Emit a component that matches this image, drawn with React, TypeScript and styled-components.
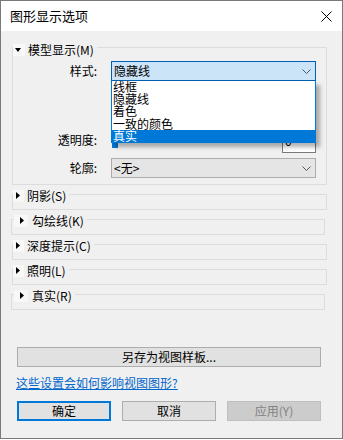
import React from 'react';
import styled, { createGlobalStyle } from 'styled-components';

const GlobalStyle = createGlobalStyle`
  html, body {
    margin: 0;
    padding: 0;
    background: #ffffff;
  }
  body {
    font-family: "Noto Sans CJK SC", "Microsoft YaHei", sans-serif;
    font-size: 12px;
    color: #000;
  }
  * {
    box-sizing: border-box;
  }
`;

const Window = styled.div`
  width: 343px;
  height: 439px;
  border: 1px solid #7a7a7a;
  background: #f0f0f0;
  display: flex;
  flex-direction: column;
`;

const TitleBar = styled.div`
  height: 30px;
  flex: none;
  background: #ffffff;
  display: flex;
  align-items: center;
  justify-content: space-between;
  padding: 0 9px 0 9px;
`;

const Title = styled.span`
  font-size: 13px;
  line-height: 14px;
`;

const CloseIcon = styled.svg`
  width: 11px;
  height: 11px;
  margin-right: 1px;
`;

const Body = styled.div`
  flex: 1;
  display: flex;
  flex-direction: column;
  padding-top: 10px;
`;

const Group = styled.fieldset<{ $indent?: boolean }>`
  margin: 0 0 3px ${(p) => (p.$indent ? 10 : 11)}px;
  width: ${(p) => (p.$indent ? 314 : 315)}px;
  min-width: 0;
  padding: 0;
  border: 1px solid #dcdcdc;
`;

const Legend = styled.legend<{ $indent?: boolean }>`
  padding: 0 3px 0 0;
  margin-left: ${(p) => (p.$indent ? 2 : 0)}px;
  height: 12px;
  line-height: 12px;
`;

const LegendInner = styled.span`
  display: inline-flex;
  align-items: center;
  height: 12px;
`;

const Toggle = styled.span<{ $indent?: boolean; $open?: boolean }>`
  display: inline-flex;
  align-items: center;
  height: 12px;
  width: ${(p) => (p.$indent ? 14 : p.$open ? 12 : 11)}px;
  padding-left: ${(p) => (p.$indent ? 6 : p.$open ? 2 : 3)}px;
  background: #f8f8f8;
`;

const ToggleLabel = styled.span<{ $indent?: boolean }>`
  margin-left: ${(p) => (p.$indent ? 4 : 3)}px;
  white-space: nowrap;
  line-height: 12px;
`;

const Collapsed = styled.div`
  height: 9px;
`;

const ModelBody = styled.div`
  padding: 8px 10px 6px 0;
  display: flex;
  flex-direction: column;
`;

const Row = styled.div<{ $h: number; $mt?: number }>`
  display: grid;
  grid-template-columns: 84px 205px;
  column-gap: 14px;
  height: ${(p) => p.$h}px;
  margin-top: ${(p) => p.$mt ?? 0}px;
  align-items: center;
`;

const Label = styled.span<{ $top?: boolean }>`
  text-align: right;
  line-height: 12px;
  align-self: ${(p) => (p.$top ? 'start' : 'center')};
  padding-top: ${(p) => (p.$top ? 4 : 0)}px;
`;

const ComboWrap = styled.div`
  position: relative;
  height: 100%;
`;

const Combo = styled.div<{ $active?: boolean }>`
  height: 100%;
  display: flex;
  align-items: center;
  justify-content: space-between;
  padding: 0 4px 0 2px;
  background: ${(p) => (p.$active ? '#cce4f7' : '#e5e5e5')};
  border: 1px solid ${(p) => (p.$active ? '#005fb0' : '#adadad')};
  line-height: 12px;
`;

const Chevron = styled.svg`
  width: 9px;
  height: 5px;
`;

const Popup = styled.ul`
  position: absolute;
  top: 100%;
  left: 0;
  width: 205px;
  margin: 0;
  padding: 0;
  list-style: none;
  background: #ffffff;
  border: 1px solid #0078d7;
  border-top: none;
  box-shadow: 4px 4px 4px rgba(0, 0, 0, 0.3);
  z-index: 5;
`;

const PopupItem = styled.li<{ $selected?: boolean }>`
  height: 12.2px;
  line-height: 12.2px;
  padding-left: 1px;
  white-space: nowrap;
  background: ${(p) => (p.$selected ? '#0078d7' : 'transparent')};
  color: ${(p) => (p.$selected ? '#ffffff' : '#000000')};
`;

const SliderRow = styled.div`
  height: 100%;
  display: flex;
  justify-content: space-between;
`;

const Slider = styled.div`
  position: relative;
  width: 160px;
  height: 18px;
  margin-left: 1px;
  display: flex;
  align-items: center;
`;

const Track = styled.div`
  position: absolute;
  left: 0;
  right: 0;
  top: 8px;
  height: 2px;
  background: #e7eaea;
  border: 1px solid #d6d6d6;
`;

const Thumb = styled.div`
  position: relative;
  width: 6px;
  height: 18px;
  background: #0078d7;
`;

const NumberBox = styled.div`
  width: 34px;
  height: 23px;
  border: 1px solid #7a7a7a;
  background: #fff;
  padding: 3px 0 0 2px;
  line-height: 14px;
`;

const Footer = styled.div`
  margin-top: auto;
  display: flex;
  flex-direction: column;
  padding: 0 0 17px 16px;
`;

const Button = styled.button<{ $primary?: boolean; $w?: number }>`
  width: ${(p) => p.$w ?? 94}px;
  height: 20px;
  padding: 0;
  font-family: inherit;
  font-size: 12px;
  line-height: 12px;
  color: ${(p) => (p.disabled ? '#838383' : '#000')};
  background: ${(p) => (p.disabled ? '#cccccc' : '#e1e1e1')};
  border: ${(p) => (p.$primary ? '2px solid #0078d7' : p.disabled ? '1px solid #bfbfbf' : '1px solid #adadad')};
`;

const HelpLink = styled.a`
  margin: 10px 0 12px -1px;
  color: #0066cc;
  text-decoration: underline;
  line-height: 12px;
  height: 12px;
`;

const ButtonRow = styled.div`
  display: flex;
  gap: 11px;
`;

const TriangleDown = () => (
  <svg width="6" height="4" viewBox="0 0 6 4">
    <path d="M0 0H6L3 4Z" fill="#000" />
  </svg>
);

const TriangleRight = () => (
  <svg width="4" height="7" viewBox="0 0 4 7">
    <path d="M0 0V7L4 3.5Z" fill="#000" />
  </svg>
);

const ChevronDown = () => (
  <Chevron viewBox="0 0 9 5">
    <path d="M0.5 0.5L4.5 4.5L8.5 0.5" fill="none" stroke="#555" strokeWidth="1" />
  </Chevron>
);

const sections = [
  { label: '阴影(S)', indent: false },
  { label: '勾绘线(K)', indent: true },
  { label: '深度提示(C)', indent: false },
  { label: '照明(L)', indent: false },
  { label: '真实(R)', indent: true },
];

const styles = ['线框', '隐藏线', '着色', '一致的颜色', '真实'];

const App: React.FC = () => {
  return (
    <>
      <GlobalStyle />
      <Window>
        <TitleBar>
          <Title>图形显示选项</Title>
          <CloseIcon viewBox="0 0 11 11">
            <path d="M0.5 0.5L10.5 10.5M10.5 0.5L0.5 10.5" stroke="#000" strokeWidth="1" />
          </CloseIcon>
        </TitleBar>
        <Body>
          <Group>
            <Legend>
              <LegendInner>
                <Toggle $open>
                  <TriangleDown />
                </Toggle>
                <ToggleLabel>模型显示(M)</ToggleLabel>
              </LegendInner>
            </Legend>
            <ModelBody>
              <Row $h={20}>
                <Label>样式:</Label>
                <ComboWrap>
                  <Combo $active>
                    <span>隐藏线</span>
                    <ChevronDown />
                  </Combo>
                  <Popup>
                    {styles.map((s) => (
                      <PopupItem key={s} $selected={s === '真实'}>
                        {s}
                      </PopupItem>
                    ))}
                  </Popup>
                </ComboWrap>
              </Row>
              <Row $h={49} />
              <Row $h={23}>
                <Label $top>透明度:</Label>
                <SliderRow>
                  <Slider>
                    <Track />
                    <Thumb />
                  </Slider>
                  <NumberBox>0</NumberBox>
                </SliderRow>
              </Row>
              <Row $h={20} $mt={5}>
                <Label>轮廓:</Label>
                <Combo>
                  <span>&lt;无&gt;</span>
                  <ChevronDown />
                </Combo>
              </Row>
            </ModelBody>
          </Group>
          {sections.map((s) => (
            <Group key={s.label} $indent={s.indent}>
              <Legend $indent={s.indent}>
                <LegendInner>
                  <Toggle $indent={s.indent}>
                    <TriangleRight />
                  </Toggle>
                  <ToggleLabel $indent={s.indent}>{s.label}</ToggleLabel>
                </LegendInner>
              </Legend>
              <Collapsed />
            </Group>
          ))}
          <Footer>
            <Button $w={304}>另存为视图样板...</Button>
            <HelpLink href="#">这些设置会如何影响视图图形?</HelpLink>
            <ButtonRow>
              <Button $primary>确定</Button>
              <Button>取消</Button>
              <Button disabled>应用(Y)</Button>
            </ButtonRow>
          </Footer>
        </Body>
      </Window>
    </>
  );
};

export default App;
